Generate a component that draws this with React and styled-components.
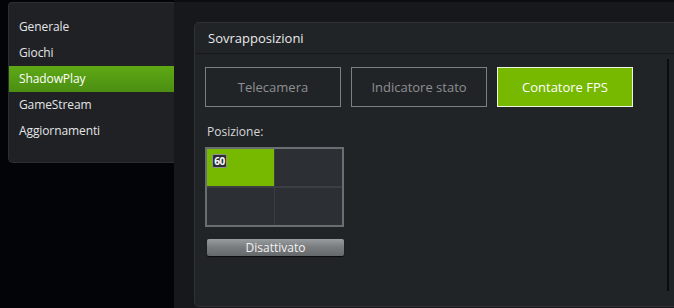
import { styled, createGlobalStyle } from 'styled-components';

const GlobalStyle = createGlobalStyle`
	html, body {
		margin: 0;
		padding: 0;
		background: #030407;
		font-family: 'Open Sans', 'Noto Sans', sans-serif;
	}
`;

const Screen = styled.div`
	display: flex;
	width: 674px;
	height: 308px;
	overflow: hidden;
	background: #030407;
`;

const SideArea = styled.div`
	width: 166px;
	padding: 2px 0 0 8px;
	flex-shrink: 0;
`;

const SideCard = styled.ul`
	list-style: none;
	margin: 0;
	box-sizing: border-box;
	height: 161px;
	padding: 11px 0 0;
	background: #1f2125;
	border: 1px solid #2b2e32;
	border-right: none;
	border-radius: 4px 0 0 5px;
`;

const SideItem = styled.li`
	height: 26px;
	line-height: 26px;
	padding-left: 10px;
	font-size: 12px;
	letter-spacing: -0.1px;
	color: ${(p) => (p.$active ? '#ffffff' : '#e4e5e6')};
	background: ${(p) => (p.$active ? 'linear-gradient(180deg, #5fa915 0%, #4b8e12 100%)' : 'transparent')};
`;

const Pane = styled.div`
	flex: 1;
	background: #16181b;
	border-top: 2px solid #0c0d10;
	padding: 20px 0 0 20px;
	overflow: hidden;
`;

const Card = styled.section`
	box-sizing: border-box;
	width: 490px;
	height: 285px;
	background: #212427;
	border: 1px solid #2e3135;
	border-radius: 5px;
	display: flex;
	flex-direction: column;
`;

const CardHeader = styled.div`
	height: 30px;
	line-height: 30px;
	padding-left: 13px;
	font-size: 13px;
	color: #e8e9ea;
	border-bottom: 1px solid #16181b;
`;

const CardBody = styled.div`
	flex: 1;
	display: flex;
	padding-right: 14px;
`;

const Content = styled.div`
	flex: 1;
	padding: 13px 0 0 10px;
`;

const ScrollTrack = styled.div`
	width: 2px;
	margin: 5px 0 15px;
	background: #0b0c0e;
`;

const Tabs = styled.div`
	display: flex;
	gap: 10px;
`;

const Tab = styled.div`
	box-sizing: border-box;
	width: 136px;
	height: 40px;
	display: flex;
	align-items: center;
	justify-content: center;
	font-size: 13px;
	border: 1px solid ${(p) => (p.$active ? '#eef5e0' : '#7d8083')};
	background: ${(p) => (p.$active ? '#76b900' : 'transparent')};
	color: ${(p) => (p.$active ? '#ffffff' : '#8d8f92')};
`;

const Label = styled.div`
	margin: 17px 0 0 2px;
	font-size: 12px;
	color: #d6d7d8;
	line-height: 16px;
`;

const PosGrid = styled.div`
	box-sizing: border-box;
	margin-top: 7px;
	width: 139px;
	height: 80px;
	border: 2px solid #6a6d71;
	background: #3b3e42;
	display: grid;
	grid-template-columns: 67px 67px;
	grid-template-rows: 37px 37px;
	column-gap: 1px;
	row-gap: 2px;
`;

const Cell = styled.div`
	position: relative;
	background: ${(p) => (p.$active ? '#76b900' : '#2c2f33')};
`;

const Badge = styled.span`
	position: absolute;
	left: 5px;
	top: 5px;
	box-sizing: border-box;
	width: 15px;
	height: 14px;
	background: #2b2d30;
	border: 1px solid #8e9093;
	border-radius: 2px;
	color: #ffffff;
	font-size: 10px;
	font-weight: 700;
	letter-spacing: -0.5px;
	line-height: 12px;
	text-align: center;
`;

const ToggleButton = styled.div`
	margin: 12px 0 0 2px;
	width: 137px;
	height: 17px;
	border-radius: 2px;
	background: linear-gradient(180deg, #9a9da0 0%, #7b7e81 45%, #65686b 100%);
	box-shadow: 0 1px 1px #0a0b0c;
	color: #f2f2f2;
	font-size: 12px;
	line-height: 17px;
	text-align: center;
`;

const menu = ['Generale', 'Giochi', 'ShadowPlay', 'GameStream', 'Aggiornamenti'];
const tabs = ['Telecamera', 'Indicatore stato', 'Contatore FPS'];

export default function App() {
	return (
		<Screen>
			<GlobalStyle />
			<SideArea>
				<SideCard>
					{menu.map((item) => (
						<SideItem key={item} $active={item === 'ShadowPlay'}>
							{item}
						</SideItem>
					))}
				</SideCard>
			</SideArea>
			<Pane>
				<Card>
					<CardHeader>Sovrapposizioni</CardHeader>
					<CardBody>
						<Content>
							<Tabs>
								{tabs.map((t) => (
									<Tab key={t} $active={t === 'Contatore FPS'}>
										{t}
									</Tab>
								))}
							</Tabs>
							<Label>Posizione:</Label>
							<PosGrid>
								<Cell $active>
									<Badge>60</Badge>
								</Cell>
								<Cell />
								<Cell />
								<Cell />
							</PosGrid>
							<ToggleButton>Disattivato</ToggleButton>
						</Content>
						<ScrollTrack />
					</CardBody>
				</Card>
			</Pane>
		</Screen>
	);
}
